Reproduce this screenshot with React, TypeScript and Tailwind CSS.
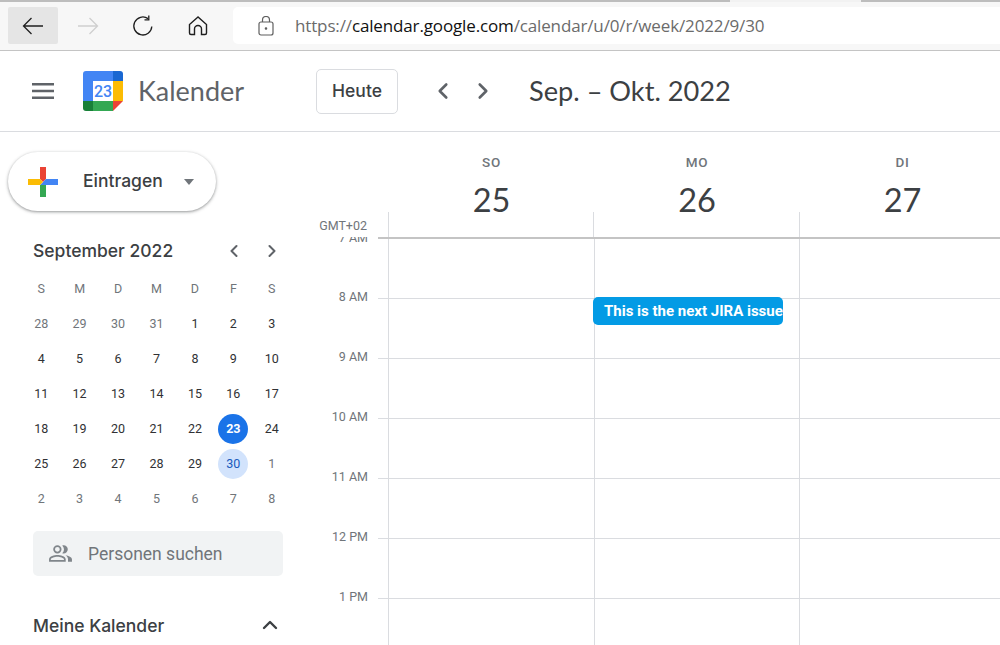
import { ChevronLeft, ChevronRight, ChevronUp } from 'lucide-react';

const SANS = "font-['Lato','Roboto',sans-serif]";
const WIDE = "font-['Inter','Roboto',sans-serif]";
const ROBOTO = "font-['Roboto',sans-serif]";

const WEEKDAYS = ['S', 'M', 'D', 'M', 'D', 'F', 'S'];
const WEEKS = [
  [28, 29, 30, 31, 1, 2, 3],
  [4, 5, 6, 7, 8, 9, 10],
  [11, 12, 13, 14, 15, 16, 17],
  [18, 19, 20, 21, 22, 23, 24],
  [25, 26, 27, 28, 29, 30, 1],
  [2, 3, 4, 5, 6, 7, 8],
];
const HOURS = ['8 AM', '9 AM', '10 AM', '11 AM', '12 PM', '1 PM'];
const DAYS = [
  { name: 'SO', num: 25, width: 'w-[205px]' },
  { name: 'MO', num: 26, width: 'w-[206px]' },
  { name: 'DI', num: 27, width: 'w-[205px]' },
];

function BrowserBar() {
  return (
    <div className="h-[51px] shrink-0 flex flex-col bg-[#f7f7f7] border-b border-[#c4c4c4]">
      <div className="h-[2px] flex">
        <div className="w-[730px] bg-[#bdbdbd]" />
        <div className="w-[131px] bg-[#f2f2f2]" />
        <div className="flex-1 bg-[#bdbdbd]" />
      </div>
      <div className="flex-1 flex pt-[5px] pb-[6px] pl-2">
        <div className="w-[50px] flex items-center justify-center bg-[#e5e5e5] rounded-[2px]">
          <svg width="22" height="18" viewBox="0 0 22 18" fill="none" stroke="#1f1f1f" strokeWidth="1.3">
            <path d="M21 9H1.500M9.500 1 1.500 9l8 8" />
          </svg>
        </div>
        <div className="w-[60px] flex items-center justify-center">
          <svg width="22" height="18" viewBox="0 0 22 18" fill="none" stroke="#cfcfcf" strokeWidth="1.3">
            <path d="M1 9h19.500M12.500 1l8 8-8 8" />
          </svg>
        </div>
        <div className="w-[50px] flex items-center justify-center">
          <svg width="22" height="22" viewBox="0 0 22 22" fill="none" stroke="#1f1f1f" strokeWidth="1.3">
            <path d="M19.800 11.500A9 9 0 1 1 16 3.600" />
            <path d="M16.800 0.500v4.300h-4.300" />
          </svg>
        </div>
        <div className="w-[60px] flex items-center justify-center">
          <svg width="20" height="20" viewBox="0 0 20 20" fill="none" stroke="#1f1f1f" strokeWidth="1.4">
            <path d="M10 1 1.500 8.500V17a1.500 1.500 0 0 0 1.500 1.500h3.500V13a3.500 3.500 0 0 1 7 0v5.500H17a1.500 1.500 0 0 0 1.500-1.500V8.500z" />
          </svg>
        </div>
        <div className="ml-[5px] flex-1 flex items-center bg-white rounded-l-[5px] pl-[25px]">
          <svg width="16" height="20" viewBox="0 0 16 20" fill="none" stroke="#5f5f5f" strokeWidth="1.2">
            <rect x="1" y="6" width="14" height="13" rx="2" />
            <path d="M4.500 6V4a3.500 3.500 0 0 1 7 0v2" />
            <circle cx="8" cy="12.500" r="0.700" fill="#5f5f5f" />
          </svg>
          <div className="ml-[21px] text-[17px] font-['Open_Sans',sans-serif] tracking-[-0.14px] text-[#6b6b6b] whitespace-nowrap">
            https://<span className="text-[#111111]">calendar.google.com</span>/calendar/u/0/r/week/2022/9/30
          </div>
        </div>
      </div>
    </div>
  );
}

function CalendarLogo() {
  return (
    <svg width="40" height="40" viewBox="0 0 40 40">
      <path d="M3 0h27v10H10v20H0V3a3 3 0 0 1 3-3z" fill="#4285f4" />
      <path d="M30 0h7a3 3 0 0 1 3 3v7H30z" fill="#1967d2" />
      <path d="M30 10h10v20H30z" fill="#fbbc04" />
      <path d="M10 30h20v10H10z" fill="#34a853" />
      <path d="M0 30h10v10H3a3 3 0 0 1-3-3z" fill="#188038" />
      <path d="M30 30h10L30 40z" fill="#ea4335" />
      <rect x="10" y="10" width="20" height="20" fill="#ffffff" />
      <text x="20" y="26" textAnchor="middle" fontSize="16" fontWeight="500" fontFamily="Roboto, sans-serif" fill="#4285f4">23</text>
    </svg>
  );
}

function AppHeader() {
  return (
    <header className="h-[81px] shrink-0 flex items-center border-b border-[#dadce0]">
      <svg className="ml-[32px]" width="22" height="18" viewBox="0 0 22 18" fill="#5f6368">
        <rect y="1" width="22" height="2.500" />
        <rect y="7.750" width="22" height="2.500" />
        <rect y="14.500" width="22" height="2.500" />
      </svg>
      <div className="ml-[29px]">
        <CalendarLogo />
      </div>
      <div className={`ml-[15px] w-[178px] text-[27px] text-[#5f6368] ${SANS}`}>Kalender</div>
      <button className={`w-[82px] h-[45px] rounded-[5px] border border-[#dadce0] text-[17.500px] font-[450] text-[#3c4043] ${WIDE}`}>
        Heute
      </button>
      <ChevronLeft className="ml-[32px] w-[26px] h-[26px] text-[#5f6368]" strokeWidth={2.400} />
      <ChevronRight className="ml-[14px] w-[26px] h-[26px] text-[#5f6368]" strokeWidth={2.400} />
      <div className={`ml-[33px] text-[27.200px] text-[#3c4043] ${SANS}`}>Sep. – Okt. 2022</div>
    </header>
  );
}

function PlusIcon() {
  return (
    <svg width="32" height="32" viewBox="0 0 32 32">
      <path d="M13 1h6v12l-3 3-3-3z" fill="#ea4335" />
      <path d="M19 13h12v6H13z" fill="#4285f4" />
      <path d="M13 19h6v12h-6z" fill="#34a853" />
      <path d="M1 13h12l3 3-3 3H1z" fill="#fbbc04" />
    </svg>
  );
}

function MiniCalendar() {
  return (
    <div>
      <div className="h-[30px] pl-[33px] flex items-center">
        <div className={`w-[191px] text-[17.500px] font-[450] text-[#3c4043] ${WIDE}`}>September 2022</div>
        <ChevronLeft className="w-[20px] h-[20px] text-[#5f6368]" strokeWidth={2.400} />
        <ChevronRight className="ml-[18px] w-[20px] h-[20px] text-[#5f6368]" strokeWidth={2.400} />
      </div>
      <div className={`mt-[6px] ml-[22px] w-[269px] grid grid-cols-7 text-[12.500px] ${ROBOTO}`}>
        {WEEKDAYS.map((d, i) => (
          <div key={i} className="h-[35px] flex items-center justify-center text-[#70757a]">{d}</div>
        ))}
        {WEEKS.map((week, w) =>
          week.map((day, i) => {
            const muted = (w === 4 && i === 6) || w === 5;
            const today = w === 3 && i === 5;
            const selected = w === 4 && i === 5;
            return (
              <div key={`${w}-${i}`} className="h-[35px] flex items-center justify-center">
                <div
                  className={`-mt-[1px] pt-[1px] w-[30px] h-[30px] rounded-full flex items-center justify-center ${
                    today
                      ? 'bg-[#1a73e8] text-white font-bold'
                      : selected
                        ? 'bg-[#d2e3fc] text-[#185abc]'
                        : muted || (w === 0 && i < 4)
                          ? 'text-[#70757a]'
                          : 'text-[#303134]'
                  }`}
                >
                  {day}
                </div>
              </div>
            );
          })
        )}
      </div>
    </div>
  );
}

function Sidebar() {
  return (
    <aside className="w-[305px] shrink-0 flex flex-col">
      <div className="mt-[20px] ml-2 w-[208px] h-[59px] rounded-full bg-white shadow-[0_1px_3px_1px_rgba(60,64,67,0.2),0_1px_2px_0_rgba(60,64,67,0.3)] flex items-center pl-[19px]">
        <PlusIcon />
        <span className={`ml-[24px] w-[101px] text-[17.500px] font-[450] text-[#3c4043] ${WIDE}`}>Eintragen</span>
        <span className="w-0 h-0 border-x-[5px] border-x-transparent border-t-[6px] border-t-[#70757a]" />
      </div>
      <div className="mt-[25px]">
        <MiniCalendar />
      </div>
      <div className={`mt-[14px] ml-[33px] w-[250px] h-[45px] rounded-[5px] bg-[#f1f3f4] flex items-center pl-[15px] text-[17.500px] text-[#70757a] ${ROBOTO}`}>
        <svg width="25" height="25" viewBox="0 0 24 24" fill="#80868b">
          <path d="M9 12a4 4 0 1 0 0-8 4 4 0 0 0 0 8zm0-6.300a2.300 2.300 0 1 1 0 4.600 2.300 2.300 0 0 1 0-4.600zM9 13.500c-2.700 0-8 1.300-8 4V20h16v-2.500c0-2.700-5.300-4-8-4zm-6.300 4.800v-.8c.2-.9 3.700-2.300 6.300-2.300s6.100 1.400 6.300 2.300v.8zM15 12a4 4 0 0 0 0-8c-.5 0-.9.100-1.300.2a5.800 5.800 0 0 1 0 7.600c.4.100.8.200 1.300.2zM16.800 13.700c1.400 1 2.400 2.300 2.400 3.800V20H23v-2.500c0-2-3.200-3.300-6.200-3.800z" />
        </svg>
        <span className="ml-[15px] pt-[2px]">Personen suchen</span>
      </div>
      <div className="mt-[37px] ml-[33px] w-[250px] h-6 flex items-center justify-between">
        <span className={`mt-[2px] leading-6 text-[17.500px] font-[450] text-[#3c4043] ${WIDE}`}>Meine Kalender</span>
        <ChevronUp className="mr-[1px] w-[24px] h-[24px] text-[#3c4043]" strokeWidth={2.400} />
      </div>
    </aside>
  );
}

function WeekGrid() {
  return (
    <main className="flex-1 min-w-0 flex flex-col overflow-hidden">
      <div className="h-[105px] shrink-0 flex">
        <div className={`w-[83px] shrink-0 flex flex-col justify-end items-end pb-[1px] pr-[21px] text-[12.500px] text-[#70757a] ${ROBOTO}`}>
          GMT+02
        </div>
        {DAYS.map((d) => (
          <div key={d.num} className={`relative ${d.width} shrink-0 flex flex-col items-center pl-[2px]`}>
            <div className={`mt-[20px] text-[13.500px] font-medium tracking-[0.800px] text-[#70757a] ${ROBOTO}`}>{d.name}</div>
            <div className={`mt-[9px] leading-[38px] text-[32.500px] text-[#3c4043] ${SANS}`}>{d.num}</div>
            <div className="absolute left-0 top-[80px] bottom-0 border-l border-[#dadce0]" />
          </div>
        ))}
      </div>
      <div className="relative flex-1 flex overflow-hidden">
        <div className={`w-[83px] shrink-0 text-[12.500px] text-[#70757a] ${ROBOTO}`}>
          <div className="h-[60px] relative overflow-hidden">
            <span className="absolute right-[20px] top-[-8px]">7 AM</span>
          </div>
          {HOURS.map((h) => (
            <div key={h} className="h-[60px] flex justify-end pr-[20px] leading-[15px] relative">
              <span className="-mt-[8px]">{h}</span>
              <div className="absolute right-0 top-[1px] w-[10px] border-t border-[#dadce0]" />
            </div>
          ))}
        </div>
        {DAYS.map((d) => (
          <div key={d.num} className="w-[205.500px] shrink-0 border-l border-[#dadce0]">
            <div className="h-[62px] border-b border-[#dadce0]" />
            {HOURS.map((h) => (
              <div key={h} className="h-[60px] border-b border-[#dadce0]" />
            ))}
          </div>
        ))}
        <div className="absolute left-[73px] right-0 top-0 h-[2px] bg-[#c4c4c4]" />
        <div className={`absolute left-[288px] top-[60px] w-[190px] h-[28px] rounded-[5px] bg-[#039be5] pl-[11px] overflow-hidden whitespace-nowrap text-[15px] leading-[28px] font-bold text-white ${ROBOTO}`}>
          This is the next JIRA issue
        </div>
      </div>
    </main>
  );
}

export default function App() {
  return (
    <div className="w-[1000px] h-[645px] overflow-hidden flex flex-col bg-white">
      <BrowserBar />
      <AppHeader />
      <div className="flex-1 min-h-0 flex">
        <Sidebar />
        <WeekGrid />
      </div>
    </div>
  );
}
